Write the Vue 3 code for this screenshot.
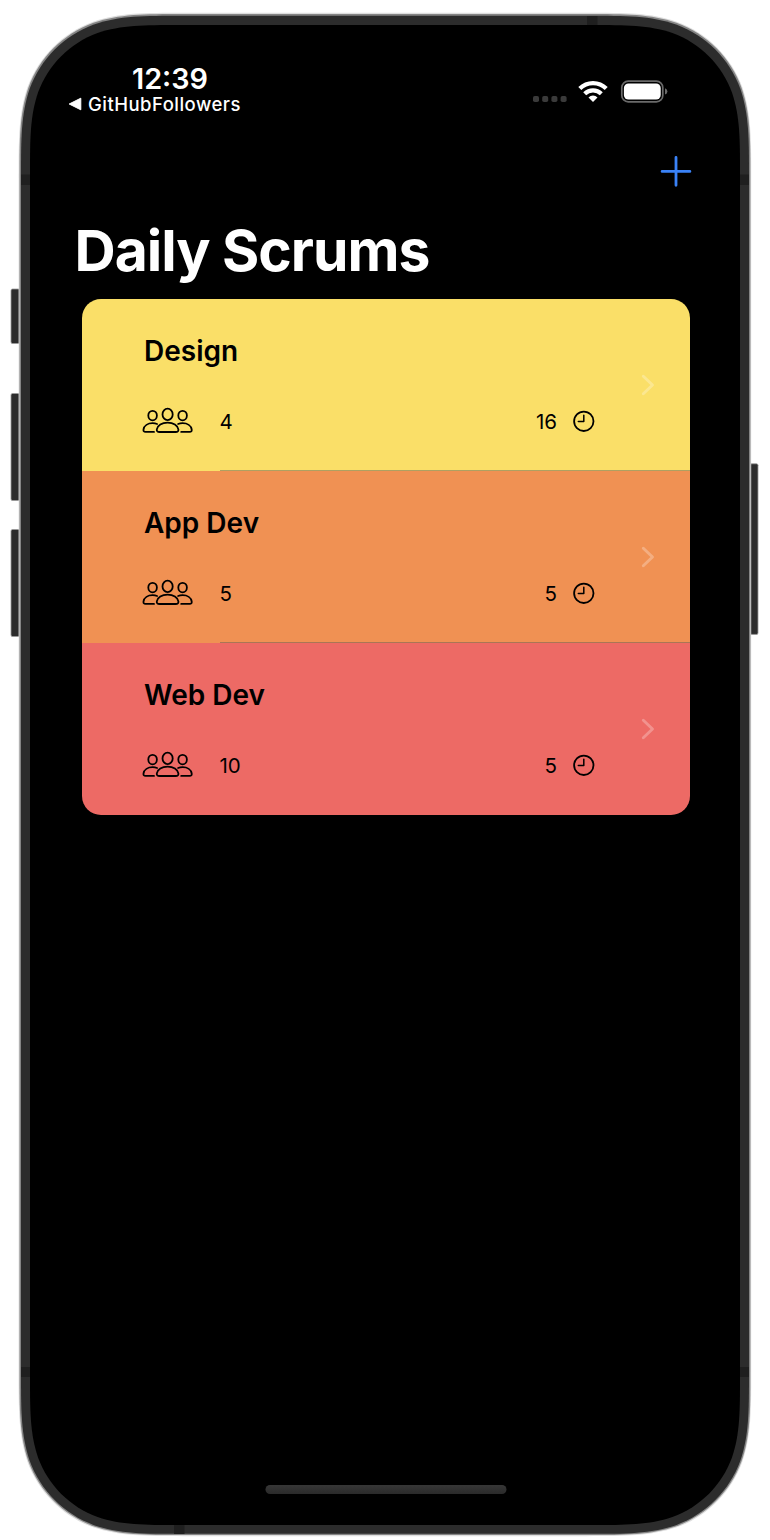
<script setup>
const scrums = [
  { title: 'Design', attendees: 4, minutes: 16, theme: 'yellow' },
  { title: 'App Dev', attendees: 5, minutes: 5, theme: 'orange' },
  { title: 'Web Dev', attendees: 10, minutes: 5, theme: 'red' },
]

// Rounded rectangle with continuous-curvature corners.
function squircle(x0, y0, x1, y1, r) {
  const a = 1.4 * r, b = 1.06 * r, c = 0.855 * r
  const d = 0.63149 * r, e = 0.07491 * r, f = 0.37282 * r, g = 0.16906 * r
  return [
    `M${x0 + a} ${y0}H${x1 - a}`,
    `C${x1 - b} ${y0} ${x1 - c} ${y0} ${x1 - d} ${y0 + e}`,
    `C${x1 - f} ${y0 + g} ${x1 - g} ${y0 + f} ${x1 - e} ${y0 + d}`,
    `C${x1} ${y0 + c} ${x1} ${y0 + b} ${x1} ${y0 + a}V${y1 - a}`,
    `C${x1} ${y1 - b} ${x1} ${y1 - c} ${x1 - e} ${y1 - d}`,
    `C${x1 - g} ${y1 - f} ${x1 - f} ${y1 - g} ${x1 - d} ${y1 - e}`,
    `C${x1 - c} ${y1} ${x1 - b} ${y1} ${x1 - a} ${y1}H${x0 + a}`,
    `C${x0 + b} ${y1} ${x0 + c} ${y1} ${x0 + d} ${y1 - e}`,
    `C${x0 + f} ${y1 - g} ${x0 + g} ${y1 - f} ${x0 + e} ${y1 - d}`,
    `C${x0} ${y1 - c} ${x0} ${y1 - b} ${x0} ${y1 - a}V${y0 + a}`,
    `C${x0} ${y0 + b} ${x0} ${y0 + c} ${x0 + e} ${y0 + d}`,
    `C${x0 + g} ${y0 + f} ${x0 + f} ${y0 + g} ${x0 + d} ${y0 + e}`,
    `C${x0 + c} ${y0} ${x0 + b} ${y0} ${x0 + a} ${y0}Z`,
  ].join('')
}
const halo = squircle(18.6, 12.8, 751.2, 1536.2, 118)
const rim = squircle(19.5, 14, 750.4, 1535, 117)
const band = squircle(21, 15.8, 749, 1533.8, 115.5)
const glass = squircle(30, 25, 740, 1525, 107)
</script>

<template>
  <div class="phone">
    <svg class="frame" width="770" height="1540" viewBox="0 0 770 1540">
      <g fill="#2c2c2c" stroke="#9a9a9a" stroke-width=".8">
        <rect x="11" y="289" width="11" height="54.5" rx="1.5" />
        <rect x="11" y="393.5" width="11" height="107" rx="1.5" />
        <rect x="11" y="529.5" width="11" height="107" rx="1.5" />
        <rect x="747" y="463.8" width="11" height="170.6" rx="1.5" />
      </g>
      <path :d="halo" fill="#dedede" />
      <path :d="rim" fill="#858585" />
      <path :d="band" fill="#2c2c2c" />
      <g fill="#1f1f1f">
        <rect x="21" y="174.5" width="10" height="10.5" />
        <rect x="739" y="174.5" width="10" height="10.5" />
        <rect x="21" y="1367" width="10" height="10" />
        <rect x="739" y="1367" width="10" height="10" />
        <rect x="587" y="16" width="10.5" height="10" />
        <rect x="174" y="1524" width="10.5" height="10" />
      </g>
      <path :d="glass" fill="#000" />
    </svg>

    <div class="screen">
      <header class="status">
        <div class="left">
          <div class="time">12:39</div>
          <div class="back">
            <svg width="14" height="14" viewBox="0 0 14 14"><path d="M1.2 7L12.8 1.2V12.8Z" fill="#fff" stroke="#fff" stroke-width="1" stroke-linejoin="round" /></svg>
            <span>GitHubFollowers</span>
          </div>
        </div>
        <div class="indicators">
          <svg class="dots" width="34" height="6" viewBox="0 0 34 6" fill="#3a3a3a">
            <rect x="0" width="6" height="6" rx="1.8" /><rect x="9.2" width="6" height="6" rx="1.8" />
            <rect x="18.4" width="6" height="6" rx="1.8" /><rect x="27.6" width="6" height="6" rx="1.8" />
          </svg>
          <svg class="wifi" width="30" height="23" viewBox="0 0 30 23">
            <g fill="none" stroke="#fff" stroke-width="4.2">
              <path d="M1.8 8.6A18.6 18.6 0 0 1 28.2 8.6" />
              <path d="M6.7 13.8A11.8 11.8 0 0 1 23.3 13.8" />
            </g>
            <path d="M15 22L10.5 17.5A6.3 6.3 0 0 1 19.5 17.5Z" fill="#fff" />
          </svg>
          <svg class="battery" width="48" height="24" viewBox="0 0 48 24">
            <rect x="1.8" y="1.2" width="41" height="20.6" rx="6.4" fill="none" stroke="#6a6a6a" stroke-width="1.7" />
            <rect x="3.9" y="3.4" width="36.8" height="16.2" rx="4.6" fill="#fff" />
            <path d="M45 8.2Q47.4 9.2 47.4 11.4T45 14.6Z" fill="#6a6a6a" />
          </svg>
        </div>
      </header>

      <nav class="toolbar">
        <svg width="32" height="32" viewBox="0 0 32 32"><path d="M2.1 16.4H29.9M16 2.5V30.3" stroke="#3a82f7" stroke-width="2.8" stroke-linecap="round" /></svg>
      </nav>

      <h1>Daily Scrums</h1>

      <ul class="list">
        <li v-for="s in scrums" :key="s.title" :class="s.theme">
          <div class="content">
            <h2>{{ s.title }}</h2>
            <div class="meta">
              <svg class="people" width="52" height="28" viewBox="0 0 52 28" fill="none" stroke="currentColor" stroke-width="1.8" stroke-linecap="round" stroke-linejoin="round">
                <ellipse cx="25.6" cy="7.4" rx="5.1" ry="5.7" />
                <path d="M17.6 25C15.4 25 14.6 24.2 14.8 22.4C15.4 18.3 19.900 15.6 25.600 15.6S35.800 18.3 36.400 22.4C36.600 24.2 35.800 25 33.600 25Z" />
                <ellipse cx="10.600" cy="8.6" rx="4.3" ry="4.8" />
                <ellipse cx="40.600" cy="8.6" rx="4.3" ry="4.8" />
                <path d="M12 24.9H3.600C1.800 24.9 1.300 24 1.500 22.5C2.100 18.8 5.800 16.2 10.600 16.2C12.400 16.2 13.900 16.5 15.100 17" />
                <path d="M39.200 24.9H47.600C49.400 24.9 49.900 24 49.700 22.5C49.100 18.8 45.400 16.2 40.600 16.2C38.800 16.2 37.300 16.5 36.100 17" />
              </svg>
              <span class="count">{{ s.attendees }}</span>
              <span class="minutes">{{ s.minutes }}</span>
              <svg class="clock" width="22" height="22" viewBox="0 0 22 22" fill="none" stroke="currentColor" stroke-linecap="round" stroke-linejoin="round">
                <circle cx="10.800" cy="11.300" r="9.7" stroke-width="1.8" />
                <path d="M10.800 5.300V11.500H5.300" stroke-width="1.5" />
              </svg>
            </div>
          </div>
          <svg class="chevron" width="14" height="22" viewBox="0 0 14 22"><path d="M2.3 2.3L11.5 11L2.3 19.7" fill="none" stroke="#fff" stroke-opacity=".27" stroke-width="2.9" stroke-linecap="round" stroke-linejoin="round" /></svg>
        </li>
      </ul>

      <div class="home"></div>
    </div>
  </div>
</template>

<style>
body { background: #fff; }
</style>

<style scoped>
* { box-sizing: border-box; margin: 0; padding: 0; }
.phone {
  position: relative;
  width: 770px;
  height: 1540px;
  overflow: hidden;
  font-family: Inter, "Liberation Sans", sans-serif;
}
svg { display: block; flex: none; }
.frame { position: absolute; inset: 0; }
.screen {
  position: relative;
  height: 1540px;
  padding: 62px 80px 46px;
  display: flex;
  flex-direction: column;
}
.status {
  height: 93px;
  margin: 0 22px 0 -12px;
  display: flex;
  justify-content: space-between;
}
.left { width: 180px; color: #fff; }
.time {
  height: 32px;
  padding-left: 64px;
  font-size: 28.8px;
  line-height: 34px;
  font-weight: 600;
}
.back {
  display: flex;
  align-items: center;
  gap: 6px;
  height: 20px;
  font-size: 18.5px;
  line-height: 20px;
  font-weight: 500;
  letter-spacing: .47px;
}
.indicators { display: flex; }
.dots { margin-top: 34px; margin-right: 11px; }
.wifi { margin-top: 18px; margin-right: 12px; }
.battery { margin-top: 18px; }
.toolbar {
  height: 61px;
  margin-right: -2px;
  display: flex;
  justify-content: flex-end;
}
h1 {
  height: 83px;
  margin-left: -5.5px;
  font-size: 57px;
  line-height: 70px;
  font-weight: 700;
  letter-spacing: -1.02px;
  color: #fff;
  white-space: nowrap;
}
.list {
  list-style: none;
  width: 608px;
  margin-left: 1.5px;
  border-radius: 19px;
  overflow: hidden;
}
li {
  position: relative;
  height: 172px;
  display: flex;
  align-items: center;
  color: #000;
}
li:not(:last-child)::after {
  content: "";
  position: absolute;
  left: 138px;
  right: 0;
  bottom: 0;
  height: 1px;
  background: rgba(84, 84, 88, .45);
}
.yellow { background: #fadf68; }
.orange { background: #f09153; }
.red { background: #ed6a65; }
.content { width: 513px; height: 172px; padding: 34px 0 0 60px; }
h2 {
  height: 74px;
  padding-left: 2.5px;
  font-size: 28px;
  line-height: 36px;
  font-weight: 600;
}
.meta {
  display: flex;
  align-items: center;
  height: 28px;
  font-size: 20.5px;
  line-height: 28px;
}
.count, .minutes { padding-top: 2px; }
.count { margin-left: 26px; }
.minutes { margin-left: auto; margin-right: 15.5px; }
.chevron { margin-left: 46px; }
.home {
  width: 241px;
  height: 9px;
  margin: auto auto 0;
  transform: translateX(.5px);
  border-radius: 5px;
  background: linear-gradient(#373737, #2a2a2a);
}
</style>
